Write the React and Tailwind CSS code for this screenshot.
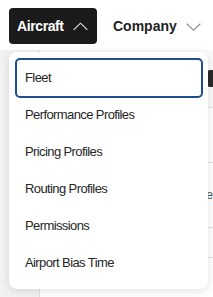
import React from "react";

const items = [
  "Fleet",
  "Performance Profiles",
  "Pricing Profiles",
  "Routing Profiles",
  "Permissions",
  "Airport Bias Time",
];

function Chevron({ up, className }) {
  return (
    <svg width="15" height="8" viewBox="0 0 15 8" fill="none" className={className}>
      <path
        d={up ? "M1 7.5L7.5 1.2L14 7.5" : "M1 1L7.5 7.2L14 1"}
        stroke="currentColor"
        strokeWidth="1.1"
        strokeLinecap="round"
        strokeLinejoin="round"
      />
    </svg>
  );
}

export default function App() {
  return (
    <div
      className="relative w-[213px] h-[297px] overflow-hidden bg-white"
      style={{ fontFamily: '"Liberation Sans", Arial, sans-serif' }}
    >
      {/* top nav */}
      <div className="h-[50px] flex items-start pt-[8px] pl-[9px] bg-white">
        <button className="h-[36px] w-[88px] flex items-center pl-[8px] gap-[9px] bg-[#1b1b1b] rounded-[4px] text-white text-[14px] font-bold tracking-[-0.4px]">
          Aircraft
          <Chevron up className="text-[#cfcfcf] mb-[1px]" />
        </button>
        <button className="h-[36px] flex items-center ml-[16px] gap-[9px] text-[#1f1f1f] text-[14px] font-bold">
          Company
          <Chevron className="text-[#8a8a8a] mt-[1px]" />
        </button>
      </div>

      {/* page behind the menu */}
      <div className="flex h-[247px]">
        <div className="w-[40px] bg-[#f2f2f2] border-r border-[#dedede]"></div>
        <div className="flex-1 bg-white flex flex-col">
          <div className="h-[58px] flex justify-end items-start pt-[20px] border-b border-[#e4e4e4] bg-[#fafafa]">
            <div className="w-[6px] h-[17px] bg-[#2a2a2a] rounded-l-[3px]"></div>
          </div>
          <div className="h-[55px] border-b border-[#e4e4e4]"></div>
          <div className="h-[65px] border-b border-[#e4e4e4] flex justify-end items-center text-[12px] text-[#555]">
            e
          </div>
          <div className="h-[30px] border-b border-[#e4e4e4]"></div>
          <div className="flex-1"></div>
        </div>
      </div>

      {/* dropdown menu */}
      <div className="absolute left-[9px] top-[52px] w-[199px] h-[237px] bg-white rounded-[8px] shadow-[0_2px_10px_rgba(0,0,0,0.12)] pt-[6px] pl-[6px] pr-[5px] text-[13px] tracking-[-0.6px] text-[#262626]">
        {items.map((label, i) =>
          i === 0 ? (
            <div
              key={label}
              className="h-[40px] -mb-[2px] flex items-center pl-[8px] border-2 border-[#1d4e8f] rounded-[5px]"
            >
              {label}
            </div>
          ) : (
            <div key={label} className="h-[37px] flex items-center pl-[10px]">
              {label}
            </div>
          )
        )}
      </div>
    </div>
  );
}
